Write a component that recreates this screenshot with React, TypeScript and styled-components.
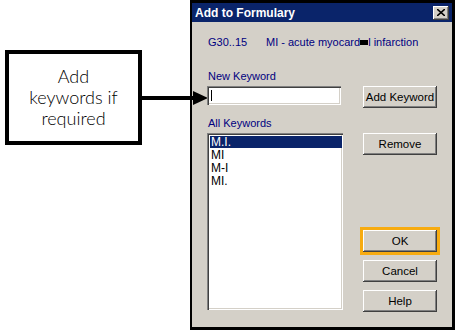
import styled, { createGlobalStyle } from 'styled-components';

const GlobalStyle = createGlobalStyle`
  html, body {
    margin: 0;
    padding: 0;
    background: #ffffff;
  }
  body {
    width: 455px;
    height: 330px;
    overflow: hidden;
  }
`;

const Page = styled.div`
  position: relative;
  display: flex;
  width: 455px;
  height: 330px;
`;

const Aside = styled.div`
  width: 190px;
  flex-shrink: 0;
  padding: 50px 0 0 5px;
  box-sizing: border-box;
`;

const Callout = styled.div`
  width: 137px;
  height: 95px;
  box-sizing: border-box;
  border: 4px solid #000;
  display: flex;
  align-items: center;
  justify-content: center;
  text-align: center;
  font-family: Lato, 'DejaVu Sans', sans-serif;
  font-weight: 300;
  font-size: 18px;
  line-height: 21px;
  color: #000;
`;

const Arrow = styled.svg`
  position: absolute;
  left: 141px;
  top: 89px;
`;

const Dialog = styled.div`
  width: 265px;
  height: 330px;
  box-sizing: border-box;
  border: 3px solid #000;
  border-left-width: 2px;
  background: #d4d0c8;
  display: flex;
  flex-direction: column;
  font-family: 'Liberation Sans', Arial, sans-serif;
  font-size: 11px;
`;

const TitleBar = styled.div`
  height: 19px;
  background: #0a246a;
  display: flex;
  align-items: center;
  justify-content: space-between;
  padding: 0 3px 0 3px;
  color: #fff;
  font-weight: bold;
  font-size: 12px;
`;

const CloseButton = styled.div`
  width: 16px;
  height: 14px;
  background: #d4d0c8;
  box-shadow: inset -1px -1px #404040, inset 1px 1px #fff, inset -2px -2px #808080;
  display: flex;
  align-items: center;
  justify-content: center;
`;

const Body = styled.div`
  flex: 1;
  padding: 14px 0 0 15px;
  display: grid;
  grid-template-columns: 136px 74px;
  column-gap: 20px;
  align-content: start;
`;

const CodeRow = styled.div`
  grid-column: 1 / 3;
  display: flex;
  color: #000080;
  height: 12px;
  line-height: 12px;
  margin-left: 1px;
`;

const Code = styled.span`
  width: 58px;
`;

const Redacted = styled.span`
  display: inline-block;
  width: 8px;
  height: 5px;
  background: #000;
  vertical-align: 1px;
`;

const Label = styled.div<{ $top: number }>`
  grid-column: 1 / 3;
  color: #000080;
  margin-top: ${(p) => p.$top}px;
  margin-left: 1px;
  height: 12px;
  line-height: 12px;
  margin-bottom: 4px;
`;

const TextInput = styled.div`
  width: 134px;
  height: 19px;
  box-sizing: border-box;
  background: #fff;
  box-shadow: inset 1px 1px #808080, inset 2px 2px #404040, inset -1px -1px #fff, inset -2px -2px #d4d0c8;
  position: relative;
  &::after {
    content: '';
    position: absolute;
    left: 4px;
    top: 4px;
    width: 1px;
    height: 11px;
    background: #000;
  }
`;

const Button = styled.div`
  width: 74px;
  height: 22px;
  box-sizing: border-box;
  background: #d4d0c8;
  box-shadow: inset -1px -1px #404040, inset 1px 1px #fff, inset -2px -2px #808080;
  display: flex;
  align-items: center;
  justify-content: center;
  color: #000;
  font-size: 11.5px;
`;

const Focus = styled.div`
  outline: 3px solid #f7ab10;
  outline-offset: 0px;
`;

const ListBox = styled.div`
  width: 136px;
  height: 177px;
  box-sizing: border-box;
  background: #fff;
  box-shadow: inset 1px 1px #808080, inset 2px 2px #404040, inset -1px -1px #fff, inset -2px -2px #d4d0c8;
  padding: 3px 1px 0 3px;
`;

const Item = styled.div<{ $selected?: boolean }>`
  height: 12px;
  line-height: 12px;
  margin-bottom: 1px;
  padding-left: 1px;
  font-size: 12px;
  color: ${(p) => (p.$selected ? '#fff' : '#000')};
  background: ${(p) => (p.$selected ? '#0a246a' : 'transparent')};
`;

const SideButtons = styled.div`
  display: flex;
  flex-direction: column;
  height: 177px;
`;

const Spacer = styled.div`
  flex: 1;
`;

const BottomButtons = styled.div`
  display: flex;
  flex-direction: column;
  gap: 8px;
  margin-bottom: -2px;
`;

const keywords = ['M.I.', 'MI', 'M-I', 'MI.'];

export default function App() {
  return (
    <Page>
      <GlobalStyle />
      <Aside>
        <Callout>
          Add
          <br />
          keywords if
          <br />
          required
        </Callout>
      </Aside>
      <Arrow width="68" height="18" viewBox="0 0 68 18">
        <rect x="0" y="7" width="54" height="4" fill="#000" />
        <polygon points="52,2 67,9 52,16" fill="#000" />
      </Arrow>
      <Dialog>
        <TitleBar>
          <span>Add to Formulary</span>
          <CloseButton>
            <svg width="8" height="7" viewBox="0 0 8 7">
              <path d="M0 0 L8 7 M8 0 L0 7" stroke="#000" strokeWidth="1.6" />
            </svg>
          </CloseButton>
        </TitleBar>
        <Body>
          <CodeRow>
            <Code>G30..15</Code>
            <span>
              MI - acute myocard<Redacted />l infarction
            </span>
          </CodeRow>
          <Label $top={22}>New Keyword</Label>
          <TextInput />
          <Button>Add Keyword</Button>
          <Label $top={9}>All Keywords</Label>
          <ListBox>
            {keywords.map((k, i) => (
              <Item key={k} $selected={i === 0}>
                {k}
              </Item>
            ))}
          </ListBox>
          <SideButtons>
            <Button>Remove</Button>
            <Spacer />
            <BottomButtons>
              <Focus>
                <Button>OK</Button>
              </Focus>
              <Button>Cancel</Button>
              <Button>Help</Button>
            </BottomButtons>
          </SideButtons>
        </Body>
      </Dialog>
    </Page>
  );
}
